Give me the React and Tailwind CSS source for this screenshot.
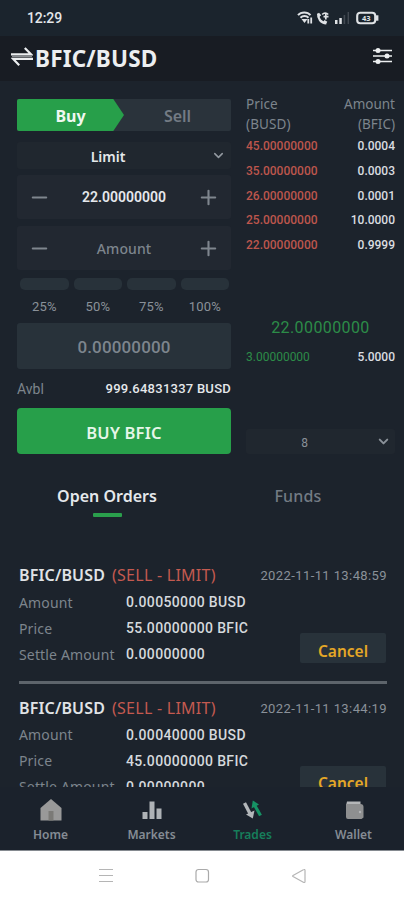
import React from 'react';
import { ChevronDown, Minus, Plus } from 'lucide-react';

const asks = [
  { price: '45.00000000', amount: '0.0004' },
  { price: '35.00000000', amount: '0.0003' },
  { price: '26.00000000', amount: '0.0001' },
  { price: '25.00000000', amount: '10.0000' },
  { price: '22.00000000', amount: '0.9999' },
];

const orders = [
  { date: '2022-11-11 13:48:59', amount: '0.00050000', price: '55.00000000', settle: '0.00000000' },
  { date: '2022-11-11 13:44:19', amount: '0.00040000', price: '45.00000000', settle: '0.00000000' },
];

const num = "font-['Roboto','Liberation_Sans',sans-serif]";

const StatusBar = () => (
  <div className="h-9 shrink-0 bg-[#1b242d] flex items-center justify-between pl-[27px] pr-[25px]">
    <span className={`${num} text-[14px] leading-4 font-medium text-[#e4e7ea] tracking-[-0.1px]`}>12:29</span>
    <div className="flex items-center text-[#dfe2e5]">
      <svg width="17" height="14" viewBox="0 0 17 14" fill="none" stroke="currentColor" strokeWidth="2">
        <path d="M1 4.2C4.2.7 10.3.7 13.5 4.2M3.5 6.8c2.2-2.4 5.8-2.4 8 0" />
        <path d="M4.5 8h6L7.5 12z" fill="currentColor" stroke="none" />
        <path d="M11.3 12.5V8M14.2 12.5V6.5" strokeWidth="1.8" />
      </svg>
      <svg className="ml-[2px]" width="14" height="14" viewBox="0 0 14 14" fill="none" stroke="currentColor">
        <path d="M2.3 2.8C1.6 7.5 5 12 10.3 12.2" strokeWidth="2.4" />
        <path d="M2 2.5l2.2 2.6M7.8 10l2.8 1.8" strokeWidth="2.6" />
        <path d="M6.2 3.5c1.8-2 4.2-2 6 0M7.5 5.7h5M9.8 2.5v6" strokeWidth="1.7" />
      </svg>
      <svg className="ml-[5px]" width="15" height="14" viewBox="0 0 15 14" fill="currentColor">
        <rect x="0" y="9" width="2.5" height="4" />
        <rect x="4.3" y="7" width="2.5" height="6" />
        <rect x="8.6" y="4" width="1.6" height="9" opacity=".2" />
        <rect x="12.6" y="1" width="1.4" height="12" opacity=".2" />
      </svg>
      <svg className="ml-[6px]" width="23" height="14" viewBox="0 0 23 14" fill="none" stroke="currentColor">
        <rect x="1.2" y="1.7" width="18" height="10.6" rx="3" strokeWidth="2.1" />
        <path d="M21 4.3v5.4" strokeWidth="2.8" />
        <text x="10.2" y="9.7" fontSize="7.5" fontWeight="700" textAnchor="middle" fill="currentColor" stroke="none">43</text>
      </svg>
    </div>
  </div>
);

const Header = () => (
  <header className="h-[45px] shrink-0 bg-[#181c23] flex items-center justify-between pl-[11px] pr-[11px] text-[#eceef0]">
    <div className="flex items-center">
      <svg className="-mt-[3px]" width="22" height="20" viewBox="0 0 22 20" fill="none" stroke="currentColor" strokeWidth="2.2">
        <path d="M0 7.3h20L13.8 1" />
        <path d="M22 11.8H2l6.2 6.4" />
        <path d="M1 9.5h20" stroke="#8a8e92" strokeWidth="1.6" />
      </svg>
      <h1 className="ml-[2px] text-[22.5px] leading-7 font-bold tracking-[0.2px]">BFIC/BUSD</h1>
    </div>
    <svg className="-mt-[6px]" width="21" height="18" viewBox="0 0 21 18" fill="currentColor">
      <path d="M1 3.5h19M1 9h19M1 14.5h19" stroke="currentColor" strokeWidth="1.5" />
      <circle cx="6" cy="3.5" r="2.5" />
      <circle cx="15" cy="9" r="2.5" />
      <circle cx="6" cy="14.5" r="2.5" />
    </svg>
  </header>
);

const Stepper = ({ children }) => (
  <div className="h-[44px] bg-[#222831] rounded-[3px] flex items-center justify-between px-[11px] text-[#7f868e]">
    <Minus size={23} strokeWidth={2.2} />
    {children}
    <Plus size={23} strokeWidth={2.2} />
  </div>
);

const TradeForm = () => (
  <div className="w-[214px]">
    <div className="h-8 bg-[#2a333b] rounded-[2px] flex text-[16px]">
      <div className="w-[107px] pt-px bg-[#279f4a] rounded-l-[2px] flex items-center justify-center text-[#eff8f1] font-bold [clip-path:polygon(0_0,90%_0,100%_50%,90%_100%,0_100%)]">
        Buy
      </div>
      <div className="flex-1 pt-[2px] flex items-center justify-center text-[#737b84] font-semibold">Sell</div>
    </div>
    <div className="mt-[11px] h-[27px] bg-[#20272f] rounded-[3px] flex items-center pr-[5px]">
      <span className="flex-1 pr-[12px] pt-px text-center text-[14px] font-semibold text-[#e5e8eb]">Limit</span>
      <ChevronDown size={15} strokeWidth={2.4} className="text-[#939aa1]" />
    </div>
    <div className="mt-[6px]">
      <Stepper>
        <span className={`${num} text-[14px] font-semibold text-[#e5e8eb]`}>22.00000000</span>
      </Stepper>
    </div>
    <div className="mt-[7px]">
      <Stepper>
        <span className="text-[14px] font-medium text-[#7d858d] tracking-[0.1px]">Amount</span>
      </Stepper>
    </div>
    <div className="mt-2 pl-[3px] pr-[2px] grid grid-cols-4 gap-x-[5px]">
      {['25%', '50%', '75%', '100%'].map((pct) => (
        <div key={pct}>
          <div className="h-[12px] rounded-[5px] bg-[#28323a]" />
          <div className={`${num} mt-[9px] text-center text-[13px] leading-4 text-[#8a9199] tracking-[0.2px]`}>{pct}</div>
        </div>
      ))}
    </div>
    <div className={`${num} mt-2 h-[46px] bg-[#28323a] rounded-[3px] flex items-center justify-center pt-[3px] text-[17px] font-medium text-[#7d858d] tracking-[0.15px]`}>
      0.00000000
    </div>
    <div className="h-[39px] pt-px flex items-center justify-between">
      <span className={`${num} text-[14px] text-[#7d858d]`}>Avbl</span>
      <span className={`${num} text-[13px] font-medium text-[#e5e8eb] tracking-[0.25px]`}>999.64831337 BUSD</span>
    </div>
    <button className="block w-full h-[46px] bg-[#279f4a] rounded-[4px] pt-[5px] text-[16.5px] font-semibold text-[#e6f6e9] tracking-[0.2px]">
      BUY BFIC
    </button>
  </div>
);

const OrderBook = () => (
  <div className="w-[149px] -mt-[4px]">
    <div className="flex justify-between text-[13.5px] leading-[19.5px] text-[#7d858d]">
      <div className="tracking-[0.1px]">Price<br />(BUSD)</div>
      <div className="text-right">Amount<br />(BFIC)</div>
    </div>
    <div className={`${num} text-[12px] leading-[24.8px]`}>
      {asks.map((row) => (
        <div key={row.price} className="flex justify-between">
          <span className="font-medium text-[#bd564c]">{row.price}</span>
          <span className="font-medium text-[#dadde0]">{row.amount}</span>
        </div>
      ))}
    </div>
    <div className={`${num} mt-[58px] text-center text-[16px] leading-6 text-[#2c8c48] tracking-[0.4px]`}>22.00000000</div>
    <div className={`${num} mt-[5px] flex justify-between text-[12px] leading-6`}>
      <span className="text-[#2c8c48]">3.00000000</span>
      <span className="font-medium text-[#dadde0]">5.0000</span>
    </div>
    <div className="mt-[60px] h-[25px] bg-[#20272f] rounded-[3px] flex items-center pr-[4px]">
      <span className={`${num} flex-1 pr-[13px] pt-[3px] text-center text-[12px] text-[#8a9199]`}>8</span>
      <ChevronDown size={15} strokeWidth={3.2} className="text-[#8a9199]" />
    </div>
  </div>
);

const Tabs = () => (
  <div className="flex text-[16px] leading-6 mt-[30px] pl-[12px]">
    <div className="w-[190px] flex flex-col items-center">
      <span className="font-semibold text-[#e5e8eb]">Open Orders</span>
      <span className="mt-[5px] w-[29px] h-[4px] rounded-[1px] bg-[#2a9f4c]" />
    </div>
    <div className="w-[192px] text-center font-medium text-[#737b84] tracking-[0.2px]">Funds</div>
  </div>
);

const OrderRow = ({ label, value, unit }) => (
  <div className="flex h-[26px] items-center">
    <span className="w-[107px] text-[14px] text-[#7d858d] tracking-[0.15px] whitespace-nowrap">{label}</span>
    <span className={`${num} pt-px text-[14px] font-medium text-[#d5d9dd] tracking-[0.35px]`}>
      {value}{unit && <span> {unit}</span>}
    </span>
  </div>
);

const Order = ({ order }) => (
  <div className="relative h-[132.5px] shrink-0">
    <div className="flex items-center justify-between h-[28px]">
      <div className="flex items-center text-[16px] leading-6">
        <span className="font-semibold text-[#e0e3e6] tracking-[0.15px]">BFIC/BUSD</span>
        <span className="ml-[7px] text-[#c45a50] tracking-[0.25px]">(SELL - LIMIT)</span>
      </div>
      <span className={`${num} pt-[2px] text-[13px] text-[#8a9199] tracking-[0.4px]`}>{order.date}</span>
    </div>
    <OrderRow label="Amount" value={order.amount} unit="BUSD" />
    <OrderRow label="Price" value={order.price} unit="BFIC" />
    <OrderRow label="Settle Amount" value={order.settle} />
    <button className="absolute right-[1px] top-[72px] w-[86px] h-[30px] bg-[#28323a] rounded-[2px] pt-[5px] text-[15.5px] leading-6 font-semibold text-[#e5a726]">
      Cancel
    </button>
    <div className="mt-[14px] h-[3px] bg-[#5d646b]" />
  </div>
);

const HomeIcon = () => (
  <svg width="22" height="22" viewBox="0 0 22 22">
    <path d="M11 0L21.5 9v12.5H.5V9z" fill="#999" />
    <path d="M8.5 12h5v9.5h-5z" fill="#7b7a77" />
  </svg>
);

const MarketsIcon = () => (
  <svg width="22" height="22" viewBox="0 0 22 22" fill="#aeb2b6">
    <rect x="1.5" y="13" width="5" height="7" />
    <rect x="8.5" y="2.5" width="5" height="17.5" />
    <rect x="15.5" y="9.5" width="5" height="10.5" />
  </svg>
);

const TradesIcon = () => (
  <svg width="22" height="22" viewBox="0 0 22 22" fill="none">
    <path d="M2.5 4l6 11.5" stroke="#b3b7ba" strokeWidth="3.4" />
    <path d="M4 15.5l8.5-4-1.7 8z" fill="#b3b7ba" />
    <path d="M12.5 6l6 10.5" stroke="#169365" strokeWidth="3.2" />
    <path d="M9.5 9.5l1.3-8L17 5.5z" fill="#169365" />
  </svg>
);

const WalletIcon = () => (
  <svg width="22" height="22" viewBox="0 0 22 22">
    <path d="M4 2.5h13.5v4H3z" fill="#b4b6b8" />
    <path d="M3 5h14.5a3 3 0 013 3v10.5l-2 1.5H5a2 2 0 01-2-2z" fill="#8e8f90" />
    <circle cx="17" cy="13" r="1.2" fill="#b4b6b8" />
  </svg>
);

const navItems = [
  { label: 'Home', icon: HomeIcon, color: 'text-[#858c94]' },
  { label: 'Markets', icon: MarketsIcon, color: 'text-[#858c94]' },
  { label: 'Trades', icon: TradesIcon, color: 'text-[#167e5b]' },
  { label: 'Wallet', icon: WalletIcon, color: 'text-[#858c94]' },
];

const BottomNav = () => (
  <nav className="h-[64px] shrink-0 bg-[#1b222c] border-b border-[#858a90] flex pt-[12px]">
    {navItems.map(({ label, icon: Icon, color }) => (
      <div key={label} className={`flex-1 flex flex-col items-center ${color}`}>
        <Icon />
        <span className="mt-[6px] text-[12px] leading-4 font-semibold">{label}</span>
      </div>
    ))}
  </nav>
);

const SystemNav = () => (
  <div className="flex-1 bg-white flex justify-between px-[97px] pt-[17px]">
    <svg width="17" height="16" viewBox="0 0 17 16" stroke="#b5b5b5" strokeWidth="1.2">
      <path d="M2 1.5h14M2 7.5h14M2 13.5h14" />
    </svg>
    <svg width="15" height="16" viewBox="0 0 15 16" fill="none" stroke="#aaa" strokeWidth="1.2">
      <rect x="1" y="1.5" width="12.5" height="12.5" rx="2.5" />
    </svg>
    <svg width="16" height="16" viewBox="0 0 16 16" fill="none" stroke="#b5b5b5" strokeWidth="1.2">
      <path d="M14 2.2v11.6a.8.8 0 01-1.2.6L2 8.6a.7.7 0 010-1.2l10.8-5.8a.8.8 0 011.2.6z" />
    </svg>
  </div>
);

export default function App() {
  return (
    <div className="w-[404px] h-[900px] overflow-hidden flex flex-col bg-[#1c232c] font-['Noto_Sans','Liberation_Sans',sans-serif]">
      <StatusBar />
      <Header />
      <main className="h-[706px] shrink-0 overflow-hidden">
        <div className="flex justify-between pt-[18px] pl-[17px] pr-[9px]">
          <TradeForm />
          <OrderBook />
        </div>
        <Tabs />
        <div className="mt-[44px] pl-[19px] pr-[17px]">
          {orders.map((order) => (
            <Order key={order.date} order={order} />
          ))}
        </div>
      </main>
      <BottomNav />
      <SystemNav />
    </div>
  );
}
